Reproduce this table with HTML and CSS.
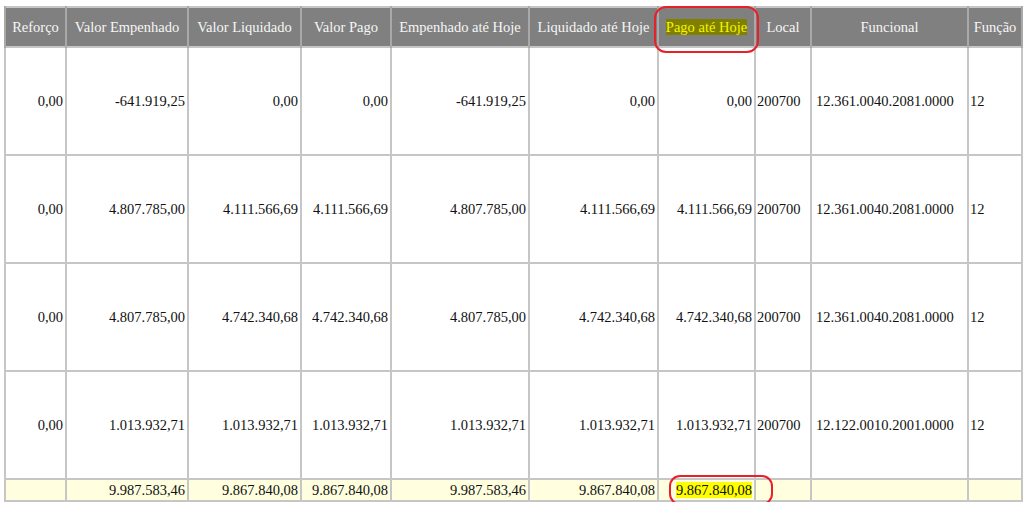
FILE: index.html
```html
<!DOCTYPE html>
<html lang="pt">
<head>
<meta charset="utf-8">
<title>Empenhos</title>
<link rel="stylesheet" href="styles.css">
</head>
<body>
<div class="wrap">
<table class="grid">
  <colgroup>
    <col class="c1"><col class="c2"><col class="c3"><col class="c4"><col class="c5">
    <col class="c6"><col class="c7"><col class="c8"><col class="c9"><col class="c10">
  </colgroup>
  <thead>
    <tr>
      <th>Reforço</th>
      <th>Valor Empenhado</th>
      <th>Valor Liquidado</th>
      <th>Valor Pago</th>
      <th>Empenhado até Hoje</th>
      <th>Liquidado até Hoje</th>
      <th class="mark-cell"><span class="hl-head">Pago até Hoje</span><span class="oval oval-head"></span></th>
      <th>Local</th>
      <th>Funcional</th>
      <th>Função</th>
    </tr>
  </thead>
  <tbody>
    <tr>
      <td class="num">0,00</td>
      <td class="num">-641.919,25</td>
      <td class="num">0,00</td>
      <td class="num">0,00</td>
      <td class="num">-641.919,25</td>
      <td class="num">0,00</td>
      <td class="num">0,00</td>
      <td class="txt">200700</td>
      <td class="txt fn">12.361.0040.2081.0000</td>
      <td class="txt">12</td>
    </tr>
    <tr>
      <td class="num">0,00</td>
      <td class="num">4.807.785,00</td>
      <td class="num">4.111.566,69</td>
      <td class="num">4.111.566,69</td>
      <td class="num">4.807.785,00</td>
      <td class="num">4.111.566,69</td>
      <td class="num">4.111.566,69</td>
      <td class="txt">200700</td>
      <td class="txt fn">12.361.0040.2081.0000</td>
      <td class="txt">12</td>
    </tr>
    <tr>
      <td class="num">0,00</td>
      <td class="num">4.807.785,00</td>
      <td class="num">4.742.340,68</td>
      <td class="num">4.742.340,68</td>
      <td class="num">4.807.785,00</td>
      <td class="num">4.742.340,68</td>
      <td class="num">4.742.340,68</td>
      <td class="txt">200700</td>
      <td class="txt fn">12.361.0040.2081.0000</td>
      <td class="txt">12</td>
    </tr>
    <tr>
      <td class="num">0,00</td>
      <td class="num">1.013.932,71</td>
      <td class="num">1.013.932,71</td>
      <td class="num">1.013.932,71</td>
      <td class="num">1.013.932,71</td>
      <td class="num">1.013.932,71</td>
      <td class="num">1.013.932,71</td>
      <td class="txt">200700</td>
      <td class="txt fn">12.122.0010.2001.0000</td>
      <td class="txt">12</td>
    </tr>
  </tbody>
  <tfoot>
    <tr>
      <td></td>
      <td class="num">9.987.583,46</td>
      <td class="num">9.867.840,08</td>
      <td class="num">9.867.840,08</td>
      <td class="num">9.987.583,46</td>
      <td class="num">9.867.840,08</td>
      <td class="num mark-cell"><span class="hl-total">9.867.840,08</span><span class="oval oval-total"></span></td>
      <td></td>
      <td></td>
      <td></td>
    </tr>
  </tfoot>
</table>
</div>
</body>
</html>
```

FILE: styles.css
```css
html, body {
  margin: 0;
  padding: 0;
  background: #ffffff;
}

body {
  font-family: "Liberation Serif", "Times New Roman", serif;
  font-size: 14.5px;
  color: #111111;
}

.wrap {
  padding: 6px 0 0 4px;
}

.grid {
  width: 1017px;
  table-layout: fixed;
  border-collapse: collapse;
  border: 2px solid #c6c6c6;
}

.c1 { width: 61px; }
.c2 { width: 122px; }
.c3 { width: 113px; }
.c4 { width: 90px; }
.c5 { width: 138px; }
.c6 { width: 129px; }
.c7 { width: 97px; }
.c8 { width: 56px; }
.c9 { width: 157px; }
.c10 { width: 54px; }

.grid th {
  height: 40px;
  padding: 0 2px;
  background: #808080;
  color: #f6f6f6;
  font-weight: normal;
  text-align: center;
  white-space: nowrap;
  border-left: 2px solid #a9a9a9;
  border-right: 2px solid #a9a9a9;
  border-top: 0;
  border-bottom: 0;
  box-sizing: border-box;
}

.grid tbody td {
  height: 108px;
  box-sizing: border-box;
}

.grid td {
  border: 2px solid #c6c6c6;
  padding: 0 2px;
  vertical-align: middle;
  white-space: nowrap;
}

.grid .num {
  text-align: right;
}

.grid .txt {
  text-align: left;
  padding-left: 1px;
}

.grid .fn {
  padding-left: 4px;
}

.grid tfoot td {
  height: 22px;
  background: #ffffe0;
  box-sizing: border-box;
}

.mark-cell {
  position: relative;
}

.hl-head {
  background: #7f7f00;
  color: #f5f500;
}

.hl-total {
  background: #ffff00;
}

.oval {
  position: absolute;
  border: 2.5px solid #e8202a;
  border-radius: 12px;
  pointer-events: none;
}

.oval-head {
  left: -5px;
  right: -5px;
  top: -2px;
  bottom: -7px;
}

.oval-total {
  left: 10px;
  right: -19px;
  top: -5px;
  bottom: -5px;
  border-radius: 11px;
}
```
